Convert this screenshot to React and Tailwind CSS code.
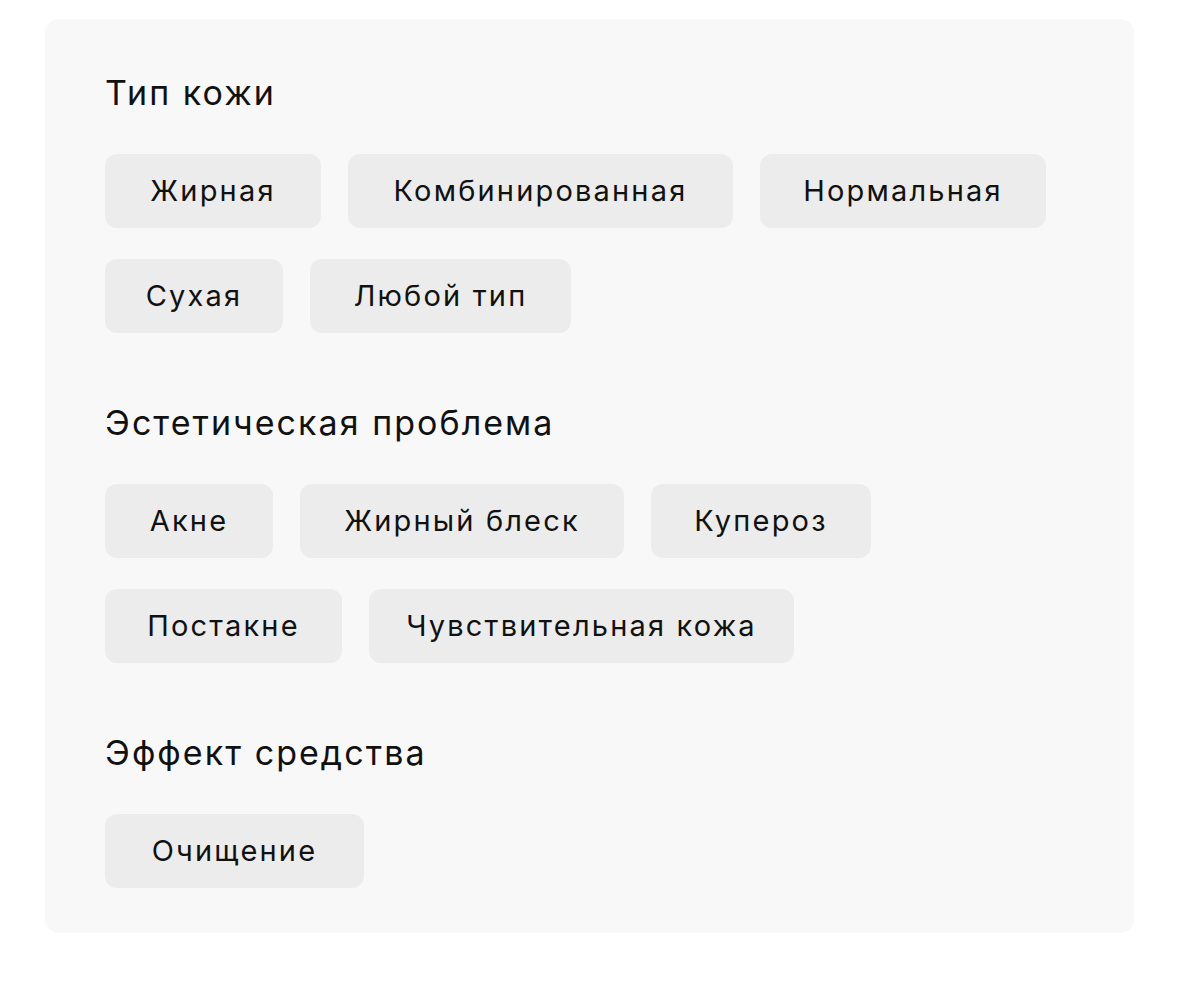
import React from "react";

const sections = [
  {
    title: "Тип кожи",
    rows: [
      [
        { label: "Жирная", w: "w-[216px]" },
        { label: "Комбинированная", w: "w-[385px]" },
        { label: "Нормальная", w: "w-[286px]" },
      ],
      [
        { label: "Сухая", w: "w-[178px]" },
        { label: "Любой тип", w: "w-[261px]" },
      ],
    ],
  },
  {
    title: "Эстетическая проблема",
    rows: [
      [
        { label: "Акне", w: "w-[168px]" },
        { label: "Жирный блеск", w: "w-[324px]" },
        { label: "Купероз", w: "w-[220px]" },
      ],
      [
        { label: "Постакне", w: "w-[237px]" },
        { label: "Чувствительная кожа", w: "w-[425px]" },
      ],
    ],
  },
  {
    title: "Эффект средства",
    rows: [[{ label: "Очищение", w: "w-[259px]" }]],
  },
];

const Chip = ({ label, w }) => (
  <button
    type="button"
    className={`${w} h-[74px] flex items-center justify-center rounded-[12px] bg-[#ececec] text-[29px] text-[#111] tracking-[0.075em]`}
  >
    {label}
  </button>
);

const App = () => {
  return (
    <div
      className="min-h-[989px] bg-white pt-[19px] pl-[45px]"
      style={{ fontFamily: "Inter, 'Noto Sans', sans-serif" }}
    >
      <div className="w-[1089px] h-[914px] rounded-[14px] bg-[#f8f8f8] pl-[60px] pt-[57px]">
        {sections.map((section, i) => (
          <div key={section.title} className={i > 0 ? "mt-[73px]" : ""}>
            <h2 className="text-[34px] leading-none text-[#111] font-normal tracking-[0.06em] mb-[44px]">
              {section.title}
            </h2>
            <div className="flex flex-col gap-[31px]">
              {section.rows.map((row, j) => (
                <div key={j} className="flex gap-[27px]">
                  {row.map((chip) => (
                    <Chip key={chip.label} {...chip} />
                  ))}
                </div>
              ))}
            </div>
          </div>
        ))}
      </div>
    </div>
  );
};

export default App;
